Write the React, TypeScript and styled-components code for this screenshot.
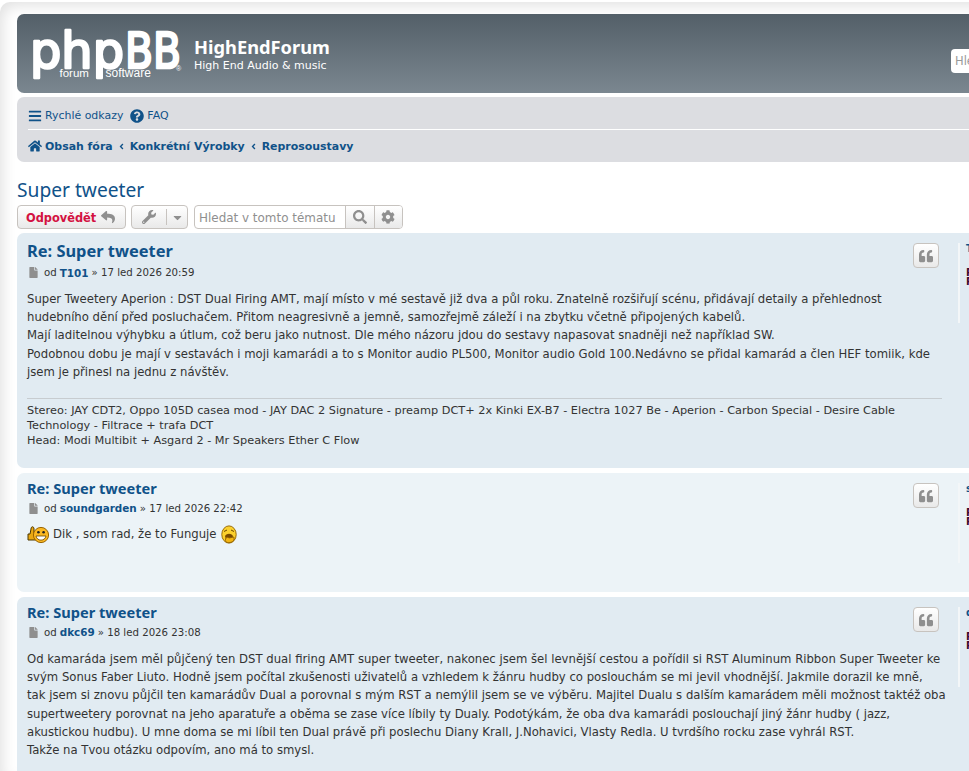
import React from "react";
import styled, { createGlobalStyle } from "styled-components";
import { FaBars, FaQuestionCircle, FaHome, FaAngleLeft, FaReply, FaWrench, FaCaretDown, FaSearch, FaCog, FaFile, FaQuoteLeft } from "react-icons/fa";

const Global = createGlobalStyle`
  html, body { margin: 0; padding: 0; background: #fff; height: 100%; overflow: hidden; }
  #root { height: 100%; }
`;
const BODY = `"DejaVu Sans", Verdana, sans-serif`;
const HEAD = `"Noto Sans", "Open Sans", sans-serif`;

const Page = styled.div`
  width: 1190px; height: 100%; box-sizing: border-box;
  margin-top: 2px; padding: 12px 0 0 17px;
  background: #fff;
  box-shadow: inset 5px 6px 14px -2px #e2e2e2;
  border-radius: 10px 0 0 0;
  font-family: ${BODY}; color: #333;
`;
const Header = styled.header`
  height: 79px; border-radius: 7px;
  background: linear-gradient(#535f68, #7b8790);
  display: flex; align-items: center; position: relative;
  padding: 0 0 0 15px; color: #fff;
`;
const Logo = styled.svg` width: 152px; height: 56px; flex: none; overflow: visible; `;
const SiteText = styled.div` margin-left: 10px; `;
const SiteName = styled.div` font: 700 18.3px/24px ${HEAD}; `;
const SiteDesc = styled.div` font-size: 11px; line-height: 13px; `;
const HeaderSearch = styled.div`
  position: absolute; left: 934px; top: 35px; width: 200px; height: 24px;
  background: #fff; border-radius: 4px 0 0 4px;
  font-size: 11.5px; line-height: 24px; color: #9a9a9a; padding-left: 4px; box-sizing: border-box;
`;
const Nav = styled.nav`
  margin-top: 4px; background: #dcdde1; border-radius: 7px; height: 65px;
  padding: 0 11px; display: flex; flex-direction: column; font-size: 10.95px; color: #105289;
`;
const LinkRow = styled.div`
  height: 32px; padding-top: 5px; box-sizing: border-box; display: flex; align-items: center; gap: 7px;
`;
const CrumbRow = styled.div`
  height: 33px; display: flex; align-items: center; gap: 4px; border-top: 1px solid #fff; font-weight: 700; box-sizing: border-box;
`;
const NavItem = styled.span` display: inline-flex; align-items: center; gap: 3px; svg { font-size: 14px; } `;
const Crumb = styled(FaAngleLeft)` font-size: 9px; color: #105289; `;
const Title = styled.h2`
  margin: 16px 0 0; font: 400 19.2px/24px ${HEAD}; color: #105289;
`;
const Toolbar = styled.div` display: flex; gap: 5px; margin-top: 3px; height: 24px; `;
const Btn = styled.div`
  display: flex; align-items: center; box-sizing: border-box; height: 24px;
  border: 1px solid #c7c3bf; border-radius: 4px;
  background: linear-gradient(#fff, #e9e9e9); color: #8f8f8f;
  font-size: 13px;
`;
const ReplyBtn = styled(Btn)` width: 109px; padding-left: 8px; gap: 5px; svg { font-size: 14px; } `;
const ReplyText = styled.span` color: #d31141; font-weight: 700; font-size: 11.4px; padding-top: 1px; `;
const ToolBtn = styled(Btn)` width: 57px; `;
const ToolPart = styled.span<{ $w: number }>`
  width: ${p => p.$w}px; height: 22px; display: flex; align-items: center; justify-content: center;
  & + & { border-left: 1px solid #c7c3bf; height: 16px; }
`;
const SearchGroup = styled(Btn)` width: 209px; margin-left: 1px; background: #fff; overflow: hidden; `;
const SearchInput = styled.span`
  width: 150px; flex: none; box-sizing: border-box; padding: 1px 0 0 4px; color: #8f8f8f; font-size: 11.95px; white-space: nowrap;
`;
const SearchAction = styled.span`
  width: 29px; height: 22px; display: flex; align-items: center; justify-content: center;
  border-left: 1px solid #c7c3bf; background: linear-gradient(#fff, #e9e9e9);
`;
const Post = styled.article<{ $alt?: boolean }>`
  margin-top: 5px; border-radius: 7px; display: flex; min-height: 119px; box-sizing: border-box;
  padding: 10px 10px 20px; background: ${p => (p.$alt ? "#ecf3f7" : "#e1ebf2")};
  &:first-of-type { margin-top: 4px; }
`;
const PostBody = styled.div` width: 915px; flex: none; position: relative; `;
const PostTitle = styled.h3<{ $first?: boolean }>`
  margin: 0 0 ${p => (p.$first ? "5px" : "6px")};
  font: 700 ${p => (p.$first ? "16.4px/16px" : "14.6px/10px")} ${HEAD}; color: #105289;
`;
const Meta = styled.div<{ $first?: boolean }>`
  display: flex; align-items: center; font-size: 10.2px; height: ${p => (p.$first ? "17px" : "18px")}; color: #333;
  svg { color: #8f8f8f; font-size: 11px; margin: 0 5px 0 1px; }
  b { color: #105289; margin: 0 3px; font-size: 10.4px; }
`;
const Content = styled.div`
  margin-top: 9px; font-size: 11.66px; line-height: 18.2px; white-space: nowrap; color: #333;
`;
const SmileRow = styled.div` display: flex; align-items: center; gap: 4px; margin-top: -1px; `;
const Sig = styled.div`
  margin-top: 17px; border-top: 1px solid #c7ccd0; padding-top: 4px;
  font-size: 11.3px; line-height: 15px; white-space: nowrap;
`;
const QuoteBtn = styled(Btn)`
  position: absolute; right: 3px; top: 0; width: 26px; height: 25px; justify-content: center; font-size: 14px;
`;
const Profile = styled.aside`
  margin-left: 16px; border-left: 2px solid #f3f6f8; height: 80px; padding-left: 6px; width: 160px; flex: none;
  font-size: 10px; line-height: 9px;
`;
const ProfileName = styled.div` color: #105289; font-weight: 700; margin: 0 0 13px; line-height: 12px; `;
const ProfileLabel = styled.div` color: #3c0a2e; font-weight: 700; `;

const Thumb = () => (
  <svg width="22" height="19" viewBox="0 0 22 19">
    <path d="M1 9h2l1-5c0-3 3-3 3 0v4l2 0v7H1z" fill="#eaa812" stroke="#4a3600" strokeWidth="1" />
    <circle cx="14" cy="10" r="7.6" fill="#fbb822" stroke="#9a6400" />
    <circle cx="11.4" cy="7.2" r="1.3" fill="#222" /><circle cx="16.6" cy="7.2" r="1.3" fill="#222" />
    <path d="M9 11c1 5.5 9 5.5 10 0z" fill="#fff" stroke="#6a4600" strokeWidth="0.8" />
  </svg>
);
const Yawn = () => (
  <svg width="16" height="19" viewBox="0 0 16 19">
    <ellipse cx="8" cy="9.5" rx="7.2" ry="8.6" fill="#fbd02e" stroke="#9a6a00" />
    <path d="M3 6.5l3-1.5M10 5l3 1.5" stroke="#6a4600" />
    <path d="M4 11c2-3 6-3 8 0l-1 4-6 0z" fill="#7a4a00" />
    <path d="M5 17c-2-3 1-6 3-4l5-1 0 3c-2 3-6 3-8 2z" fill="#f3b512" stroke="#8a5a00" strokeWidth="0.8" />
  </svg>
);
const PhpbbLogo = () => (
  <Logo viewBox="0 0 152 56">
    <text x="-2" y="41.5" fontFamily="DejaVu Sans" fontSize="50" fill="#fff" stroke="#fff" strokeWidth="2.6" strokeLinejoin="round" textLength="94" lengthAdjust="spacingAndGlyphs">php</text>
    <text x="93" y="41.5" fontFamily="DejaVu Sans" fontSize="50" fill="#fff" stroke="#fff" strokeWidth="2.6" strokeLinejoin="round" textLength="56" lengthAdjust="spacingAndGlyphs">BB</text>
    <text x="27.5" y="51" fontFamily="Liberation Sans" fontSize="11.5" fill="#fff">forum</text>
    <text x="73.5" y="51" fontFamily="Liberation Sans" fontSize="12" fill="#fff">software</text>
    <text x="144" y="45" fontFamily="Liberation Sans" fontSize="7" fill="#fff">®</text>
  </Logo>
);

const PostMeta = ({ who, when, first }: { who: string; when: string; first?: boolean }) => (
  <Meta $first={first}><FaFile />od<b>{who}</b>» {when}</Meta>
);
const Side = ({ name }: { name: string }) => (
  <Profile>
    <ProfileName>{name}</ProfileName>
    <ProfileLabel>Příspěvky: 100</ProfileLabel>
    <ProfileLabel>Registrován: 2014</ProfileLabel>
  </Profile>
);

export default function App() {
  return (
    <Page>
      <Global />
      <Header>
        <PhpbbLogo />
        <SiteText>
          <SiteName>HighEndForum</SiteName>
          <SiteDesc>High End Audio &amp; music</SiteDesc>
        </SiteText>
        <HeaderSearch>Hledat…</HeaderSearch>
      </Header>
      <Nav>
        <LinkRow>
          <NavItem><FaBars />Rychlé odkazy</NavItem>
          <NavItem><FaQuestionCircle />FAQ</NavItem>
        </LinkRow>
        <CrumbRow>
          <NavItem><FaHome />Obsah fóra</NavItem>
          <Crumb />
          <NavItem>Konkrétní Výrobky</NavItem>
          <Crumb />
          <NavItem>Reprosoustavy</NavItem>
        </CrumbRow>
      </Nav>
      <Title>Super tweeter</Title>
      <Toolbar>
        <ReplyBtn><ReplyText>Odpovědět</ReplyText><FaReply /></ReplyBtn>
        <ToolBtn>
          <ToolPart $w={35}><FaWrench size={14} /></ToolPart>
          <ToolPart $w={20}><FaCaretDown size={13} /></ToolPart>
        </ToolBtn>
        <SearchGroup>
          <SearchInput>Hledat v tomto tématu</SearchInput>
          <SearchAction><FaSearch size={14} /></SearchAction>
          <SearchAction><FaCog size={14} /></SearchAction>
        </SearchGroup>
      </Toolbar>
      <Post>
        <PostBody>
          <QuoteBtn><FaQuoteLeft /></QuoteBtn>
          <PostTitle $first>Re: Super tweeter</PostTitle>
          <PostMeta first who="T101" when="17 led 2026 20:59" />
          <Content>
            Super Tweetery Aperion : DST Dual Firing AMT, mají místo v mé sestavě již dva a půl roku. Znatelně rozšiřují scénu, přidávají detaily a přehlednost<br />
            hudebního dění před posluchačem. Přitom neagresivně a jemně, samozřejmě záleží i na zbytku včetně připojených kabelů.<br />
            Mají laditelnou výhybku a útlum, což beru jako nutnost. Dle mého názoru jdou do sestavy napasovat snadněji než například SW.<br />
            Podobnou dobu je mají v sestavách i moji kamarádi a to s Monitor audio PL500, Monitor audio Gold 100.Nedávno se přidal kamarád a člen HEF tomiik, kde<br />
            jsem je přinesl na jednu z návštěv.
          </Content>
          <Sig>
            Stereo: JAY CDT2, Oppo 105D casea mod - JAY DAC 2 Signature - preamp DCT+ 2x Kinki EX-B7 - Electra 1027 Be - Aperion - Carbon Special - Desire Cable<br />
            Technology - Filtrace + trafa DCT<br />
            Head: Modi Multibit + Asgard 2 - Mr Speakers Ether C Flow
          </Sig>
        </PostBody>
        <Side name="T101" />
      </Post>
      <Post $alt>
        <PostBody>
          <QuoteBtn><FaQuoteLeft /></QuoteBtn>
          <PostTitle>Re: Super tweeter</PostTitle>
          <PostMeta who="soundgarden" when="17 led 2026 22:42" />
          <Content>
            <SmileRow><Thumb /> Dik , som rad, že to Funguje <Yawn /></SmileRow>
          </Content>
        </PostBody>
        <Side name="soundgarden" />
      </Post>
      <Post>
        <PostBody>
          <QuoteBtn><FaQuoteLeft /></QuoteBtn>
          <PostTitle>Re: Super tweeter</PostTitle>
          <PostMeta who="dkc69" when="18 led 2026 23:08" />
          <Content>
            Od kamaráda jsem měl půjčený ten DST dual firing AMT super tweeter, nakonec jsem šel levnější cestou a pořídil si RST Aluminum Ribbon Super Tweeter ke<br />
            svým Sonus Faber Liuto. Hodně jsem počítal zkušenosti uživatelů a vzhledem k žánru hudby co poslouchám se mi jevil vhodnější. Jakmile dorazil ke mně,<br />
            tak jsem si znovu půjčil ten kamarádův Dual a porovnal s mým RST a nemýlil jsem se ve výběru. Majitel Dualu s dalším kamarádem měli možnost taktéž oba<br />
            supertweetery porovnat na jeho aparatuře a oběma se zase více líbily ty Dualy. Podotýkám, že oba dva kamarádi poslouchají jiný žánr hudby ( jazz,<br />
            akustickou hudbu). U mne doma se mi líbil ten Dual právě při poslechu Diany Krall, J.Nohavici, Vlasty Redla. U tvrdšího rocku zase vyhrál RST.<br />
            Takže na Tvou otázku odpovím, ano má to smysl.
          </Content>
        </PostBody>
        <Side name="dkc69" />
      </Post>
    </Page>
  );
}
